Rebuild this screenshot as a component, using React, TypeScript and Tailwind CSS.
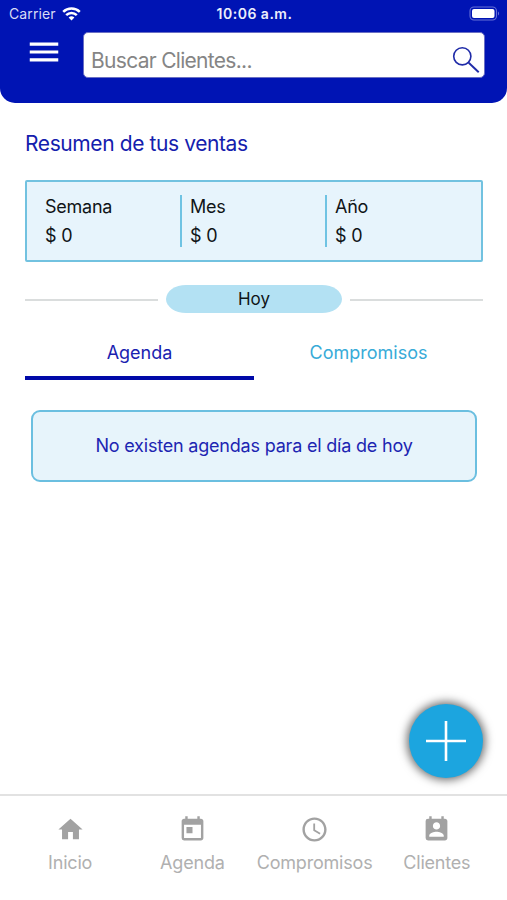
import React from "react";
import {
  MdHome,
  MdMenu,
  MdPermContactCalendar,
  MdSchedule,
  MdToday,
} from "react-icons/md";

const SALES = [
  { label: "Semana", value: "$ 0" },
  { label: "Mes", value: "$ 0" },
  { label: "Año", value: "$ 0" },
];

const NAV_ITEMS = [
  { label: "Inicio", icon: MdHome },
  { label: "Agenda", icon: MdToday },
  { label: "Compromisos", icon: MdSchedule },
  { label: "Clientes", icon: MdPermContactCalendar },
];

function StatusBar() {
  return (
    <div className="grid h-[27px] grid-cols-3 items-center pl-[9px] pr-[7px] text-white">
      <div className="flex items-center gap-[6px]">
        <span className="text-[14px] leading-none tracking-[0.1px] text-[#d8dcf5]">Carrier</span>
        {/* Wifi */}
        <svg width="19" height="14" viewBox="0 0 19 14" fill="none" stroke="currentColor" strokeWidth="2.5">
          <path d="M1.2 4.8a11.8 11.8 0 0 1 16.6 0" />
          <path d="M4.2 8.2a7.5 7.5 0 0 1 10.6 0" />
          <path d="M9.5 13.6L6.6 10.6a4.2 4.2 0 0 1 5.8 0z" fill="currentColor" stroke="none" />
        </svg>
      </div>
      <span className="whitespace-nowrap text-center text-[14px] font-semibold leading-none tracking-[0.5px] text-[#eceefb]">
        10:06 a.m.
      </span>
      {/* Battery */}
      <svg className="justify-self-end" width="31" height="15" viewBox="0 0 31 15" fill="none">
        <rect x="1" y="1" width="26.5" height="13" rx="4" stroke="#6670d6" strokeWidth="1.1" />
        <rect x="3" y="3" width="22.5" height="9" rx="2" fill="#fff" />
        <path d="M29 5.5v4c1.4-.6 1.4-3.4 0-4z" fill="#6670d6" />
      </svg>
    </div>
  );
}

function Header() {
  return (
    <header className="h-[103px] rounded-b-[15px] bg-[#0014b4]">
      <StatusBar />
      <div className="flex pl-[26px] pr-[22px] pt-[5px]">
        <button className="mt-[1px] h-[38px] w-[38px] text-white" aria-label="Menú">
          <MdMenu className="-ml-[1px]" size={38} />
        </button>
        <div className="ml-[19px] flex h-[46px] flex-1 items-center rounded-[5px] border border-[#6a6fc4] bg-white pl-[7px] pr-1">
          <span className="flex-1 pt-[12px] text-[21px] leading-[24px] tracking-[-0.7px] text-[#858585]">
            Buscar Clientes...
          </span>
          <svg className="mt-[10px]" width="28" height="28" viewBox="0 0 28 28" fill="none" stroke="#1f2ba8">
            <circle cx="10.3" cy="10.3" r="8.6" strokeWidth="1.6" />
            <path d="M16.7 16.7l10 9.6" strokeWidth="1.9" />
          </svg>
        </div>
      </div>
    </header>
  );
}

function SalesSummary() {
  return (
    <section>
      <h1 className="text-[21px] leading-[28px] tracking-[-0.4px] text-[#1420ad]">Resumen de tus ventas</h1>
      <div className="mt-[22px] flex h-[82px] rounded-[2px] border-2 border-[#72c2e0] bg-[#e7f4fc] pl-2 pt-[13px]">
        {SALES.map((item, i) => (
          <div
            key={item.label}
            className={`h-[52px] w-[145px] border-l-2 pl-[8px] text-[18px] leading-[29px] text-[#101417] ${
              i === 0 ? "border-transparent" : "border-[#6fc3e3]"
            }`}
          >
            <p className="-mt-[3px] tracking-[-0.25px]">{item.label}</p>
            <p className="tracking-[-0.2px]">{item.value}</p>
          </div>
        ))}
      </div>
    </section>
  );
}

function Today() {
  return (
    <section>
      <div className="mt-[23px] flex items-center gap-2">
        <div className="mt-[1px] h-[2px] flex-1 bg-[#dadddd]" />
        <div className="h-7 w-[176px] rounded-[20px/14px] bg-[#b3e1f3] text-center text-[17px] leading-[29px] text-[#101417]">
          Hoy
        </div>
        <div className="mt-[1px] h-[2px] flex-1 bg-[#dadddd]" />
      </div>
      <div className="mt-[17px] grid h-[50px] grid-cols-2 text-center text-[18px] leading-[46px]">
        <button className="border-b-4 border-[#0009a8] text-[#1a22b0]">Agenda</button>
        <button className="border-b-4 border-transparent text-[#38abd8]">Compromisos</button>
      </div>
      <div className="mx-[6px] mt-[30px] flex h-[72px] items-center justify-center rounded-[9px] border-2 border-[#6bbfe0] bg-[#e7f4fb] pb-[2px]">
        <p className="text-[18px] tracking-[-0.2px] text-[#1d25b2]">No existen agendas para el día de hoy</p>
      </div>
    </section>
  );
}

function BottomNav() {
  return (
    <nav className="grid h-[106px] grid-cols-4 border-t-2 border-[#e2e2e2] px-[9px] pt-[19px]">
      {NAV_ITEMS.map(({ label, icon: Icon }) => (
        <button key={label} className="flex flex-col items-center justify-start">
          <Icon size={29} className="text-[#a2a2a2]" />
          <span className="mt-[7px] text-[18px] leading-6 tracking-[-0.2px] text-[#b0b0b0]">{label}</span>
        </button>
      ))}
    </nav>
  );
}

export default function App() {
  return (
    <div className="relative flex h-[900px] w-[507px] flex-col overflow-hidden bg-white font-['Inter',sans-serif]">
      <Header />
      <main className="flex-1 pl-[25px] pr-6 pt-[27px]">
        <SalesSummary />
        <Today />
      </main>
      {/* Floating add button */}
      <button
        className="absolute bottom-[122px] right-6 flex h-[74px] w-[74px] items-center justify-center rounded-full bg-[#1ca5df] shadow-[0_0_10px_2px_rgba(0,0,0,0.6)]"
        aria-label="Agregar"
      >
        <svg width="42" height="42" viewBox="0 0 42 42" stroke="#fff" strokeWidth="2.6">
          <path d="M21 1v40M1 21h40" />
        </svg>
      </button>
      <BottomNav />
    </div>
  );
}
